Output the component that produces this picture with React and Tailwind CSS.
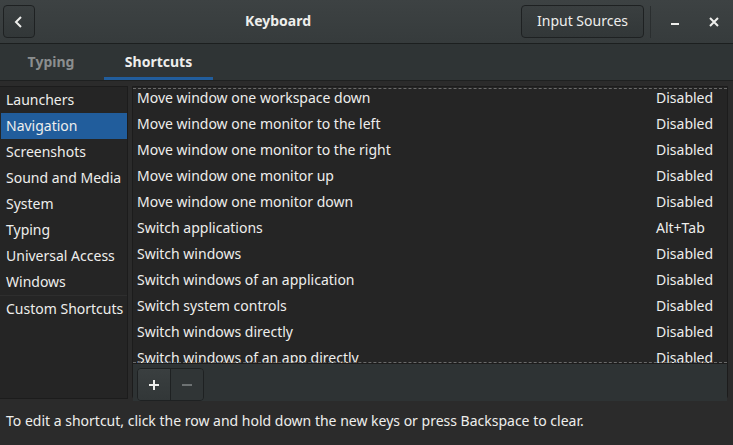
const categories = [
  'Launchers',
  'Navigation',
  'Screenshots',
  'Sound and Media',
  'System',
  'Typing',
  'Universal Access',
  'Windows',
];

const shortcuts = [
  ['Move window one workspace down', 'Disabled'],
  ['Move window one monitor to the left', 'Disabled'],
  ['Move window one monitor to the right', 'Disabled'],
  ['Move window one monitor up', 'Disabled'],
  ['Move window one monitor down', 'Disabled'],
  ['Switch applications', 'Alt+Tab'],
  ['Switch windows', 'Disabled'],
  ['Switch windows of an application', 'Disabled'],
  ['Switch system controls', 'Disabled'],
  ['Switch windows directly', 'Disabled'],
  ['Switch windows of an app directly', 'Disabled'],
];

function Header() {
  return (
    <div className="flex h-[44px] shrink-0 items-center border-b border-[#1c1f1f] bg-gradient-to-b from-[#3d4243] to-[#363b3c] px-[3px]">
      <button className="flex h-[33px] w-[32px] items-center justify-center rounded-[4px] border border-[#1e2122] bg-gradient-to-b from-[#3a3f40] to-[#323738]">
        <svg width="12" height="14" viewBox="0 0 12 14">
          <path d="M8 2 L3 7 L8 12" fill="none" stroke="#eeeeec" strokeWidth="2" />
        </svg>
      </button>
      <div className="flex-1 pb-[2px] text-center text-[14px] font-bold text-[#eeeeec]">Keyboard</div>
      <button className="h-[33px] w-[123px] rounded-[4px] border border-[#1e2122] bg-gradient-to-b from-[#3a3f40] to-[#323738] pb-[2px] text-[14px] text-[#eeeeec]">
        Input Sources
      </button>
      <div className="ml-[6px] h-[32px] w-px bg-[#2a2e2f]" />
      <div className="flex w-[47px] items-center justify-center pt-[4px]">
        <div className="h-[2px] w-[8px] bg-[#eeeeec]" />
      </div>
      <div className="flex w-[32px] items-center justify-center">
        <svg width="10" height="10" viewBox="0 0 10 10">
          <path d="M1 1 L9 9 M9 1 L1 9" stroke="#eeeeec" strokeWidth="2" />
        </svg>
      </div>
    </div>
  );
}

function Tabs() {
  return (
    <div className="flex h-[37px] shrink-0 items-stretch border-b border-[#1e2020] bg-[#2f3435] pl-[4px] text-[14px] font-bold">
      <div className="flex w-[94px] items-center justify-center pb-[2px] text-[#8b8e8f]">Typing</div>
      <div className="ml-[6px] flex w-[109px] items-center justify-center border-b-[3px] border-[#215d9c] pt-[1px] text-[#eeeeec]">
        Shortcuts
      </div>
    </div>
  );
}

export default function App() {
  return (
    <div className="flex h-[445px] w-[733px] flex-col overflow-hidden bg-[#2b2b2b] text-[#eeeeec]" style={{ fontFamily: '"Noto Sans", "Open Sans", sans-serif' }}>
      <Header />
      <Tabs />
      <div className="flex h-[318px] shrink-0 gap-[4px] pl-0 pr-[5px] pt-[5px]">
        <div className="w-[128px] whitespace-nowrap border border-l-0 border-[#1c1c1c] bg-[#252525] text-[14px]">
          {categories.map((name) => (
            <div
              key={name}
              className={`flex h-[26px] items-center pb-[2px] ${name === 'Navigation' ? 'ml-[1px] bg-[#215d9c] pl-[5px]' : 'pl-[6px]'}`}
            >
              {name}
            </div>
          ))}
          <div className="h-px bg-[#2e2e2e]" />
          <div className="flex h-[26px] items-center pb-[2px] pl-[6px]">Custom Shortcuts</div>
        </div>
        <div className="flex flex-1 flex-col rounded-b-[3px] border border-[#1c1c1c]">
          <div className="relative h-[276px] shrink-0 overflow-hidden bg-[#252525] text-[14px]">
            <div className="-mt-[2px]">
              {shortcuts.map(([label, key]) => (
                <div key={label} className="flex h-[26px] items-center justify-between whitespace-nowrap pb-[2px] pl-[4px] pr-[16px]">
                  <span>{label}</span>
                  <span className="w-[55px]">{key}</span>
                </div>
              ))}
            </div>
            <div className="absolute left-0 right-0 top-[1px] border-t border-dashed border-[#6a6a6a]" />
            <div className="absolute bottom-0 left-0 right-0 border-t border-dashed border-[#6a6a6a]" />
          </div>
          <div className="flex flex-1 items-start border-t border-[#1c1c1c] bg-[#2e3334] px-[4px] pt-[4px]">
            <div className="flex h-[33px] overflow-hidden rounded-[4px] border border-[#1e2122]">
              <div className="flex w-[33px] items-center justify-center border-r border-[#1e2122] bg-gradient-to-b from-[#3a3f40] to-[#323738]">
                <svg width="12" height="12" viewBox="0 0 12 12">
                  <path d="M6 1 V11 M1 6 H11" stroke="#eeeeec" strokeWidth="2" />
                </svg>
              </div>
              <div className="flex w-[32px] items-center justify-center bg-[#303536]">
                <svg width="12" height="12" viewBox="0 0 12 12">
                  <path d="M1 6 H11" stroke="#6d7273" strokeWidth="2" />
                </svg>
              </div>
            </div>
          </div>
        </div>
      </div>
      <div className="flex flex-1 items-center px-[6px] pb-[3px] text-[14px]">
        To edit a shortcut, click the row and hold down the new keys or press Backspace to clear.
      </div>
    </div>
  );
}
